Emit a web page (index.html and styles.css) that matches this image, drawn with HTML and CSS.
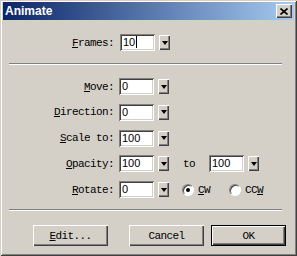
FILE: index.html
```html
<!DOCTYPE html>
<html lang="en">
<head>
  <meta charset="UTF-8">
  <title>Animate</title>
  <link rel="stylesheet" href="styles.css">
</head>
<body>

<div class="window">
  <div class="titlebar">
    <span class="title">Animate</span>
    <span class="close">
      <svg width="8" height="7" viewBox="0 0 8 7">
        <path d="M0.5 0.5 L7.5 6.5 M7.5 0.5 L0.5 6.5" stroke="#000" stroke-width="1.6" fill="none"/>
      </svg>
    </span>
  </div>

  <div class="content">
    <div class="row frames-row">
      <span class="label"><u>F</u>rames:</span>
      <span class="field">10<i class="caret"></i></span>
      <span class="drop"></span>
    </div>

    <div class="sep"></div>

    <div class="rows">
      <div class="row">
        <span class="label"><u>M</u>ove:</span>
        <span class="field">0</span>
        <span class="drop"></span>
      </div>
      <div class="row">
        <span class="label"><u>D</u>irection:</span>
        <span class="field">0</span>
        <span class="drop"></span>
      </div>
      <div class="row">
        <span class="label"><u>S</u>cale to:</span>
        <span class="field">100</span>
        <span class="drop"></span>
      </div>
      <div class="row">
        <span class="label"><u>O</u>pacity:</span>
        <span class="field">100</span>
        <span class="drop"></span>
        <span class="to">to</span>
        <span class="field">100</span>
        <span class="drop"></span>
      </div>
      <div class="row">
        <span class="label"><u>R</u>otate:</span>
        <span class="field">0</span>
        <span class="drop"></span>
        <span class="radio checked"></span>
        <span class="radio-label"><u>C</u>W</span>
        <span class="radio"></span>
        <span class="radio-label">CC<u>W</u></span>
      </div>
    </div>

    <div class="sep sep-bottom"></div>

    <div class="buttons">
      <span class="btn"><u>E</u>dit...</span>
      <span class="btn cancel">Cancel</span>
      <span class="btn default">OK</span>
    </div>
  </div>
</div>

</body>
</html>
```

FILE: styles.css
```css
body {
  margin: 0;
  font-family: "Liberation Mono", monospace;
  font-size: 11px;
  letter-spacing: -0.6px;
  color: #000;
}

.window {
  width: 297px;
  height: 256px;
  box-sizing: border-box;
  padding: 2px 3px 3px;
  background: #d4d0c8;
  box-shadow: inset 1px 1px #d4d0c8, inset -1px -1px #404040,
              inset 2px 2px #fff, inset -2px -2px #808080;
}

.titlebar {
  height: 18px;
  display: flex;
  align-items: center;
  justify-content: space-between;
  padding: 0 2px;
  background: linear-gradient(to right, #0a246a, #a6caf0);
}

.title {
  color: #fff;
  font: bold 12px "Liberation Sans", sans-serif;
  letter-spacing: 0;
}

.close {
  width: 16px;
  height: 14px;
  display: flex;
  align-items: center;
  justify-content: center;
  background: #d4d0c8;
  box-shadow: inset 1px 1px #fff, inset -1px -1px #404040, inset -2px -2px #808080;
}

.content {
  display: flex;
  flex-direction: column;
}

.row {
  display: flex;
  align-items: center;
  height: 17px;
}

.frames-row {
  margin-top: 14px;
}

.label {
  width: 111px;
  text-align: right;
  margin-right: 5px;
  white-space: pre;
}

.field {
  width: 35px;
  height: 17px;
  box-sizing: border-box;
  padding: 2px 0 0 3px;
  background: #fff;
  font: 11px "Liberation Sans", sans-serif;
  letter-spacing: 0;
  line-height: 13px;
  box-shadow: inset 1px 1px #808080, inset -1px -1px #fff,
              inset 2px 2px #404040, inset -2px -2px #d4d0c8;
}

.frames-row .field {
  margin-left: 1px;
}

.caret {
  display: inline-block;
  width: 1px;
  height: 12px;
  margin-left: 1px;
  vertical-align: -2px;
  background: #000;
}

.drop {
  width: 11px;
  height: 15px;
  margin-left: 4px;
  display: flex;
  align-items: center;
  justify-content: center;
  background: #d4d0c8;
  box-shadow: inset 1px 1px #fff, inset -1px -1px #404040, inset -2px -2px #808080;
}

.drop::after {
  content: "";
  border-left: 3.5px solid transparent;
  border-right: 3.5px solid transparent;
  border-top: 4px solid #000;
}

.sep {
  height: 0;
  margin: 12px 12px 0 6px;
  border-top: 1px solid #808080;
  border-bottom: 1px solid #fff;
}

.rows {
  display: flex;
  flex-direction: column;
  gap: 8.75px;
  margin-top: 13px;
}

.to {
  margin-left: 14px;
  width: 12px;
  margin-right: 14px;
}

.radio {
  position: relative;
  width: 12px;
  height: 12px;
  box-sizing: border-box;
  border-radius: 50%;
  background: #fff;
  border: 1px solid;
  border-color: #808080 #fff #fff #808080;
  box-shadow: inset 1px 1px #404040;
  margin-left: 13px;
}

.radio + .radio-label + .radio {
  margin-left: 19px;
}

.radio.checked::after {
  content: "";
  position: absolute;
  left: 3px;
  top: 3px;
  width: 4px;
  height: 4px;
  border-radius: 50%;
  background: #000;
}

.radio-label {
  margin-left: 4px;
}

.sep-bottom {
  margin-top: 11px;
}

.buttons {
  display: flex;
  margin-top: 14px;
  padding-left: 30px;
}

.btn {
  width: 75px;
  height: 21px;
  box-sizing: border-box;
  display: flex;
  align-items: center;
  justify-content: center;
  background: #d4d0c8;
  box-shadow: inset 1px 1px #fff, inset -1px -1px #404040, inset -2px -2px #808080;
}

.cancel {
  margin-left: 21px;
}

.default {
  margin-left: 7px;
  border: 1px solid #000;
  box-shadow: inset 1px 1px #fff, inset -1px -1px #404040, inset -2px -2px #808080;
}
```
